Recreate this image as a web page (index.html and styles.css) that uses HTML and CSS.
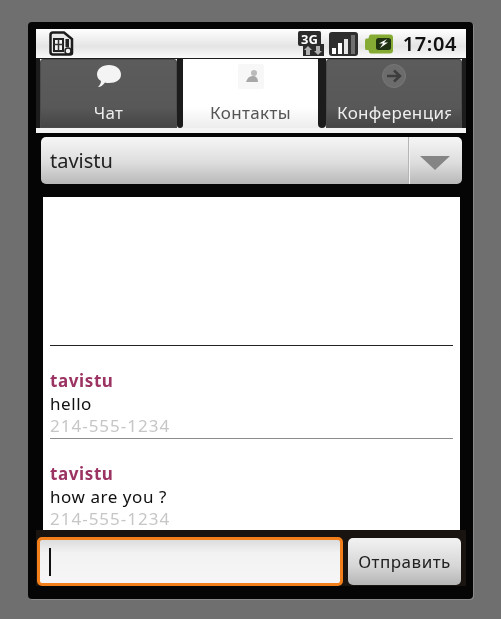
FILE: index.html
```html
<!DOCTYPE html>
<html>
    <head>
        <title>Chat</title>
        <link rel="stylesheet" href="styles.css">
    </head>
    <body>
        <div class="phone">
            <div class="status">
                <svg width="25" height="25" viewBox="0 0 25 25">
                    <path d="M4 1.500H15L23 8V22Q23 23.500 21 23.500H4Q1.500 23.500 1.500 21V4Q1.500 1.500 4 1.500Z" fill="#e9e9e9" stroke="#1c1c1c" stroke-width="2.500"/>
                    <path d="M5 8H14V20H5Z" fill="#f4f4f4" stroke="#222" stroke-width="2"/>
                    <path d="M9.500 8V20M5 13.500H14" stroke="#333" stroke-width="1.500"/>
                    <rect x="16.500" y="8" width="3.500" height="8" fill="#222"/>
                    <circle cx="19" cy="20" r="3" fill="#f4f4f4" stroke="#222" stroke-width="1.500"/>
                </svg>
                <div class="status-right">
                    <svg class="status-icon" width="27" height="25" viewBox="0 0 27 25">
                        <path d="M1 2Q1 0 3 0H22Q24 0 24 2V13H27V25H6V15H3Q1 15 1 13Z" fill="#2b2b2b"/>
                        <text class="net-label" x="4" y="12.500">3G</text>
                        <path d="M11 15L15 19H13V24H9V19H7ZM21 24L17 20H19V15H23V20H25Z" fill="#b0b0b0"/>
                    </svg>
                    <svg class="status-icon" width="29" height="24" viewBox="0 0 29 24">
                        <rect x="0" y="0" width="29" height="24" rx="3" fill="#2e2e2e"/>
                        <rect x="3" y="16" width="4" height="6" fill="#fff"/>
                        <rect x="9" y="11" width="4" height="11" fill="#fff"/>
                        <rect x="15" y="7" width="4" height="15" fill="#e4e4e4"/>
                        <rect x="22" y="3" width="4" height="19" fill="#6f6f6f"/>
                    </svg>
                    <svg class="status-icon battery" width="28" height="20" viewBox="0 0 28 20">
                        <path d="M6 0.500H25Q28 0.500 28 3.500V16.500Q28 19.500 25 19.500H6Q4 19.500 3.500 16H1Q0 16 0 14V7Q0 5 1 4.500H3.500Q4 0.500 6 0.500Z" fill="#86ab35"/>
                        <rect x="11" y="4" width="15" height="12" rx="2.500" fill="#1f3313"/>
                        <path d="M22 5L14 9.500H18L15 14L23 8.500H19Z" fill="#fff"/>
                    </svg>
                    <span class="clock">17:04</span>
                </div>
            </div>

            <div class="tabs">
                <span class="tab-gap end"></span>
                <div class="tab first">
                    <svg class="tab-icon" width="28" height="25" viewBox="0 0 28 25">
                        <path d="M14 1C21 1 26 5 26 10.500C26 16 21 19 14 19C12.500 19 11 19 10 18.500C8 21 6 23 3 23C5 21 6 19 6 17C3.500 15.500 2 13 2 10.500C2 5 7 1 14 1Z" fill="#f4f4f4"/>
                    </svg>
                    <span class="tab-label">Чат</span>
                </div>
                <span class="tab-gap"></span>
                <div class="tab active">
                    <svg class="tab-icon" width="28" height="25" viewBox="0 0 28 25">
                        <rect x="1" y="0" width="26" height="25" rx="2" fill="#f7f7f7"/>
                        <circle cx="17" cy="9" r="3" fill="#bbb"/>
                        <path d="M9 18Q11 11 17 12Q21 13 21 18Z" fill="#a8a8a8"/>
                    </svg>
                    <span class="tab-label">Контакты</span>
                </div>
                <span class="tab-gap wide"></span>
                <div class="tab last">
                    <svg class="tab-icon" width="28" height="25" viewBox="0 0 28 25">
                        <circle cx="14" cy="12" r="11.500" fill="#6c6c6c" stroke="#777"/>
                        <path d="M7 12H19M14 6.500L20 12L14 17.500" fill="none" stroke="#3d3d3d" stroke-width="2.500"/>
                    </svg>
                    <span class="tab-label clipped">Конференция</span>
                </div>
                <span class="tab-gap end"></span>
            </div>
            <div class="tab-strip"></div>

            <div class="spinner">
                <span class="spinner-text">tavistu</span>
                <div class="spinner-arrow"></div>
            </div>

            <div class="messages">
                <div class="msg-top"></div>
                <div class="msg">
                    <div class="msg-name">tavistu</div>
                    <div class="msg-text">hello</div>
                    <div class="msg-phone">214-555-1234</div>
                </div>
                <div class="msg">
                    <div class="msg-name">tavistu</div>
                    <div class="msg-text">how are you ?</div>
                    <div class="msg-phone">214-555-1234</div>
                </div>
            </div>

            <div class="compose">
                <div class="input"><span class="cursor"></span></div>
                <button class="send">Отправить</button>
            </div>
        </div>
    </body>
</html>
```

FILE: styles.css
```css
body {
    background-color: #6f6f6f;
    font-family: "Noto Sans", "Open Sans", sans-serif;
    height: 619px;
    margin: 0;
    overflow: hidden;
}

.phone {
    background-color: #050505;
    border-radius: 4px;
    box-shadow: 1px 1px 0 #8a8a8a;
    box-sizing: border-box;
    display: flex;
    filter: blur(0.5px);
    flex-direction: column;
    height: 577px;
    margin: 22px 0 0 28px;
    padding: 7px 7px 0 8px;
    width: 445px;
}

.status {
    align-items: center;
    background: linear-gradient(#ffffff, #e4e4e4 60%, #fafafa);
    border-bottom: 1px solid #1c1c1c;
    box-sizing: border-box;
    display: flex;
    flex: none;
    height: 30px;
    justify-content: space-between;
    padding: 0 9px 0 13px;
}

.status-right {
    align-items: center;
    display: flex;
}

.status-icon {
    margin-left: 5px;
}

.battery {
    margin-left: 7px;
}

.net-label {
    fill: white;
    font-size: 13px;
    font-weight: bold;
}

.clock {
    color: #111;
    font-size: 20px;
    font-weight: 600;
    letter-spacing: 0.6px;
    margin-left: 10px;
}

.tabs {
    background-color: #f4f4f4;
    display: flex;
    flex: none;
    height: 69px;
}

.tab-gap {
    background-color: #1c1c1c;
    border-radius: 0 0 4px 4px;
    flex: none;
    width: 6px;
}

.tab-gap.wide {
    width: 8px;
}

.tab-gap.end {
    border-radius: 0;
    width: 4px;
}

.tab {
    align-items: center;
    background: linear-gradient(#5c5c5c, #585858 70%, #444444);
    border-radius: 4px 4px 0 0;
    box-shadow: inset 0 0 0 1px #4c4c4c;
    box-sizing: border-box;
    color: #eeeeee;
    display: flex;
    flex: none;
    flex-direction: column;
    overflow: hidden;
    padding-top: 5px;
}

.tab.first {
    width: 137px;
}

.tab.active {
    background: linear-gradient(#ffffff, #ffffff 70%, #ececec);
    box-shadow: none;
    color: #555555;
    width: 135px;
}

.tab.last {
    width: 136px;
}

.tab-label {
    font-size: 17px;
    letter-spacing: 0.35px;
    line-height: 22px;
    margin-top: 13px;
    white-space: nowrap;
}

.tab-label.clipped {
    align-self: flex-start;
    margin-left: 11px;
    overflow: hidden;
    width: 114px;
}

.tab-strip {
    background-color: #f4f4f4;
    flex: none;
    height: 5px;
}

.spinner {
    align-items: center;
    background: linear-gradient(#f6f6f6, #dddddd 55%, #b8b8b8);
    border-radius: 5px;
    color: #222222;
    display: flex;
    flex: none;
    font-size: 20px;
    height: 47px;
    justify-content: space-between;
    margin: 4px 4px 0 5px;
}

.spinner-text {
    margin-left: 9px;
}

.spinner-arrow {
    border-left: 1px solid #b5b5b5;
    box-shadow: inset 1px 0 0 #f2f2f2;
    box-sizing: border-box;
    height: 47px;
    position: relative;
    width: 54px;
}

.spinner-arrow::after {
    border-left: 15px solid transparent;
    border-right: 15px solid transparent;
    border-top: 14px solid #858585;
    content: "";
    left: 11px;
    position: absolute;
    top: 19px;
}

.messages {
    background-color: white;
    box-sizing: border-box;
    flex: none;
    height: 333px;
    margin: 13px 6px 0 7px;
    overflow: hidden;
    padding: 0 7px;
}

.msg-top {
    border-bottom: 1px solid #222222;
    height: 148px;
}

.msg {
    border-bottom: 1px solid #8c8c8c;
    box-sizing: border-box;
    height: 93px;
    padding-top: 23px;
}

.msg-name {
    color: #9c3463;
    font-size: 17px;
    font-weight: bold;
    letter-spacing: 0.6px;
    line-height: 23px;
}

.msg-text {
    color: #111111;
    font-size: 17px;
    letter-spacing: 0.55px;
    line-height: 23px;
}

.msg-phone {
    color: #c6c6c6;
    font-size: 17px;
    letter-spacing: 1px;
    line-height: 22px;
}

.compose {
    background-color: #1a1410;
    box-sizing: border-box;
    display: flex;
    flex: none;
    gap: 5px;
    height: 56px;
    padding: 7px 5px 0 1px;
}

.input {
    align-items: center;
    background: linear-gradient(#dddddd, #f2f2f2 30%, #f6f6f8);
    border: 3px solid #f27f1a;
    border-radius: 5px;
    box-sizing: border-box;
    display: flex;
    height: 49px;
    padding-left: 9px;
    width: 306px;
}

.cursor {
    background-color: #111111;
    height: 28px;
    width: 2px;
}

.send {
    background: linear-gradient(#f2f2f2, #d6d6d6 60%, #b5b5b5);
    border: none;
    border-radius: 5px;
    color: #222222;
    font-family: "Noto Sans", "Open Sans", sans-serif;
    font-size: 17px;
    height: 47px;
    letter-spacing: 0.5px;
    margin-top: 1px;
    padding: 0;
    width: 113px;
}
```
